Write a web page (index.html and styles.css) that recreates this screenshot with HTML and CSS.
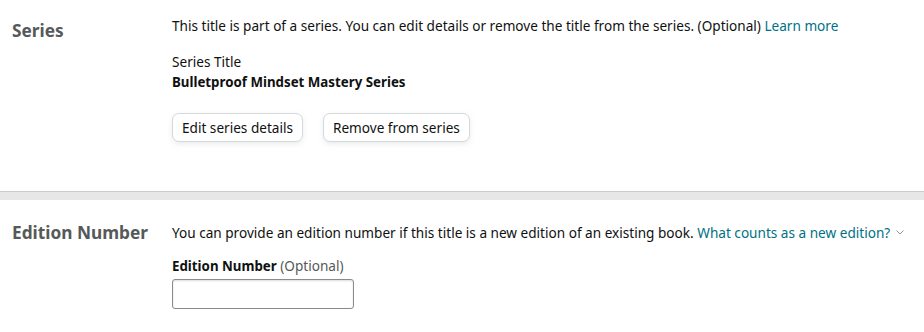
FILE: index.html
```html
<!DOCTYPE html>
<html>
<head>
<meta charset="utf-8">
<link rel="stylesheet" href="styles.css">
</head>
<body>
<section class="row row-series">
  <h2 class="row-label">Series</h2>
  <div class="row-body">
    <p class="desc">This title is part of a series. You can edit details or remove the title from the series. (Optional) <a class="link" href="#">Learn more</a></p>
    <div class="field">
      <div class="field-label">Series Title</div>
      <div class="field-value">Bulletproof Mindset Mastery Series</div>
    </div>
    <div class="actions">
      <button class="btn">Edit series details</button>
      <button class="btn">Remove from series</button>
    </div>
  </div>
</section>
<div class="divider"></div>
<section class="row row-edition">
  <h2 class="row-label">Edition Number</h2>
  <div class="row-body">
    <p class="desc nowrap">You can provide an edition number if this title is a new edition of an existing book. <a class="link" href="#">What counts as a new edition?</a><svg class="chev" width="8" height="5" viewBox="0 0 8 5"><path d="M0.5 0.5 L4 4 L7.5 0.5" fill="none" stroke="#8d9096" stroke-width="1"/></svg></p>
    <label class="input-label"><b class="bold-label">Edition Number</b> <span class="opt">(Optional)</span></label>
    <input class="text-input" type="text">
  </div>
</section>
</body>
</html>
```
FILE: styles.css
```css
* { box-sizing: border-box; }
html, body { margin: 0; padding: 0; background: #fff; }
body {
  font-family: "Noto Sans", "Open Sans", sans-serif;
  font-size: 13.6px;
  line-height: 20px;
  color: #0f1111;
}
.row { display: flex; }
.row-label {
  width: 172px;
  flex: none;
  margin: 0;
  padding-left: 12px;
  font-size: 17.3px;
  font-weight: 700;
  color: #565959;
  line-height: 24px;
}
.row-body { flex: 1; min-width: 0; }
.row-series { padding: 16px 0 49px; }
.row-series .row-label { margin-top: 3px; }
.row-edition { padding: 23px 0 20px; }
.row-edition .row-label { margin-top: -2px; }
.desc { margin: 0; }
.nowrap { white-space: nowrap; }
.link { color: #007185; text-decoration: none; }
.chev { margin-left: 6px; vertical-align: 3px; }
.field { margin-top: 16px; }
.field-value { font-weight: 700; font-size: 13.3px; }
.actions { display: flex; gap: 20px; margin-top: 21px; }
.btn {
  font: inherit;
  color: #0f1111;
  background: #fff;
  border: 1px solid #d5d9d9;
  border-radius: 7px;
  height: 29px;
  padding: 0 9px;
  box-shadow: 0 2px 5px rgba(213, 217, 217, 0.5);
}
.divider {
  height: 9px;
  background: #e7e7e7;
  border-top: 1px solid #cccccc;
}
.input-label { display: block; margin-top: 13px; }
.bold-label { font-size: 13.3px; }
.opt { color: #565959; }
.text-input {
  display: block;
  margin-top: 3px;
  width: 182px;
  height: 30px;
  border: 1px solid #888c8c;
  border-radius: 3px;
  box-shadow: 0 1px 2px rgba(15,17,17,0.15) inset;
}
```
